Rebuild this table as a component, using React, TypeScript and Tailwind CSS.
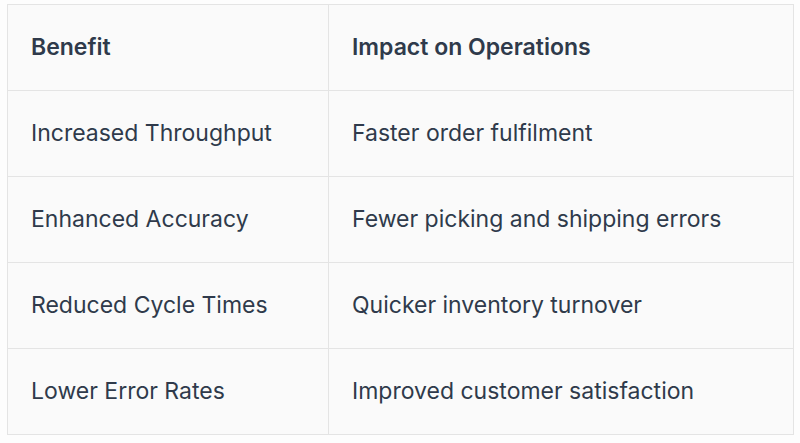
const rows = [
  ["Increased Throughput", "Faster order fulfilment"],
  ["Enhanced Accuracy", "Fewer picking and shipping errors"],
  ["Reduced Cycle Times", "Quicker inventory turnover"],
  ["Lower Error Rates", "Improved customer satisfaction"],
];

export default function App() {
  return (
    <div className="h-[443px] w-[800px] bg-[#fdfdfd] pl-[7px] pt-[4px] font-['Inter',sans-serif] text-[#2f3a4b]">
      <table className="w-[787px] table-fixed border-collapse bg-[#fafafa] text-[23px]">
        <colgroup>
          <col className="w-[321px]" />
          <col />
        </colgroup>
        <thead>
          <tr className="h-[86px]">
            <th className="border border-[#e4e4e4] px-[23px] text-left font-semibold">Benefit</th>
            <th className="border border-[#e4e4e4] px-[23px] text-left font-semibold">Impact on Operations</th>
          </tr>
        </thead>
        <tbody>
          {rows.map(([benefit, impact]) => (
            <tr key={benefit} className="h-[86px]">
              <td className="border border-[#e4e4e4] px-[23px]">{benefit}</td>
              <td className="border border-[#e4e4e4] px-[23px]">{impact}</td>
            </tr>
          ))}
        </tbody>
      </table>
    </div>
  );
}
